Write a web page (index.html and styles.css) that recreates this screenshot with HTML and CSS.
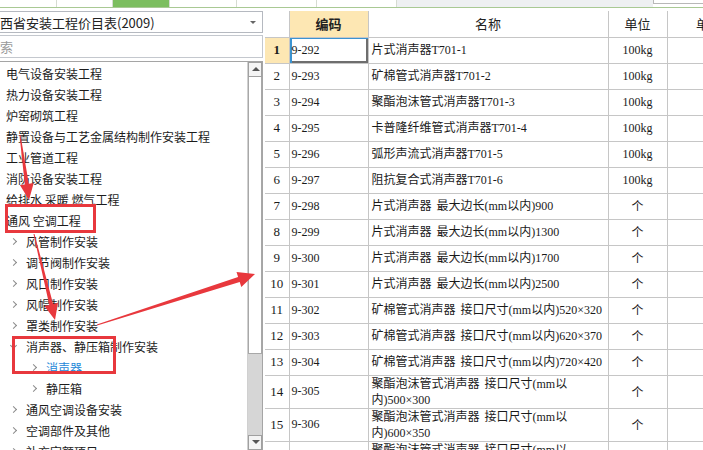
FILE: index.html
```html
<!DOCTYPE html>
<html lang="zh-CN">
<head>
<meta charset="utf-8">
<title>定额库</title>
<link rel="stylesheet" href="styles.css">
</head>
<body>
<div class="page">
  <div class="tabs">
    <div class="tab t1"></div>
    <div class="tab t2"></div>
    <div class="tab t3 on"></div>
    <div class="tab t4"></div>
    <div class="tab t5"></div>
    <div class="tab t6"></div>
    <div class="tab fill"></div>
    <div class="tab t8"></div>
  </div>
  <div class="main">
    <aside class="left">
      <div class="combo"><span class="combo-text">西省安装工程价目表(2009)</span><span class="caret"></span></div>
      <div class="search">索</div>
      <div class="tree">
        <ul class="list">
          <li class="node l0">电气设备安装工程</li>
          <li class="node l0">热力设备安装工程</li>
          <li class="node l0">炉窑砌筑工程</li>
          <li class="node l0">静置设备与工艺金属结构制作安装工程</li>
          <li class="node l0">工业管道工程</li>
          <li class="node l0">消防设备安装工程</li>
          <li class="node l0">给排水 采暖 燃气工程</li>
          <li class="node l0">通风 空调工程</li>
          <li class="node l1"><span class="chev"></span>风管制作安装</li>
          <li class="node l1"><span class="chev"></span>调节阀制作安装</li>
          <li class="node l1"><span class="chev"></span>风口制作安装</li>
          <li class="node l1"><span class="chev"></span>风帽制作安装</li>
          <li class="node l1"><span class="chev"></span>罩类制作安装</li>
          <li class="node l1"><span class="chev open"></span>消声器、静压箱制作安装</li>
          <li class="node l2 sel"><span class="chev"></span>消声器</li>
          <li class="node l2"><span class="chev"></span>静压箱</li>
          <li class="node l1"><span class="chev"></span>通风空调设备安装</li>
          <li class="node l1"><span class="chev"></span>空调部件及其他</li>
          <li class="node l1"><span class="chev"></span>补充定额项目</li>
        </ul>
        <div class="vscroll">
          <div class="sbtn up"></div>
          <div class="thumb"></div>
          <div class="track"></div>
          <div class="sbtn down"></div>
        </div>
      </div>
    </aside>
    <section class="grid">
      <table class="tbl">
        <colgroup>
          <col class="c-rh"><col class="c-code"><col class="c-name"><col class="c-unit"><col class="c-price">
        </colgroup>
        <thead>
          <tr><th class="rh"></th><th class="hl">编码</th><th>名称</th><th>单位</th><th>单价</th></tr>
        </thead>
        <tbody>
          <tr class="cur"><td class="rh">1</td><td class="code focus">9-292</td><td class="name">片式消声器T701-1</td><td class="unit">100kg</td><td></td></tr>
          <tr><td class="rh">2</td><td class="code">9-293</td><td class="name">矿棉管式消声器T701-2</td><td class="unit">100kg</td><td></td></tr>
          <tr><td class="rh">3</td><td class="code">9-294</td><td class="name">聚酯泡沫管式消声器T701-3</td><td class="unit">100kg</td><td></td></tr>
          <tr><td class="rh">4</td><td class="code">9-295</td><td class="name">卡普隆纤维管式消声器T701-4</td><td class="unit">100kg</td><td></td></tr>
          <tr><td class="rh">5</td><td class="code">9-296</td><td class="name">弧形声流式消声器T701-5</td><td class="unit">100kg</td><td></td></tr>
          <tr><td class="rh">6</td><td class="code">9-297</td><td class="name">阻抗复合式消声器T701-6</td><td class="unit">100kg</td><td></td></tr>
          <tr><td class="rh">7</td><td class="code">9-298</td><td class="name">片式消声器 最大边长(mm以内)900</td><td class="unit">个</td><td></td></tr>
          <tr><td class="rh">8</td><td class="code">9-299</td><td class="name">片式消声器 最大边长(mm以内)1300</td><td class="unit">个</td><td></td></tr>
          <tr><td class="rh">9</td><td class="code">9-300</td><td class="name">片式消声器 最大边长(mm以内)1700</td><td class="unit">个</td><td></td></tr>
          <tr><td class="rh">10</td><td class="code">9-301</td><td class="name">片式消声器 最大边长(mm以内)2500</td><td class="unit">个</td><td></td></tr>
          <tr><td class="rh">11</td><td class="code">9-302</td><td class="name">矿棉管式消声器 接口尺寸(mm以内)520×320</td><td class="unit">个</td><td></td></tr>
          <tr><td class="rh">12</td><td class="code">9-303</td><td class="name">矿棉管式消声器 接口尺寸(mm以内)620×370</td><td class="unit">个</td><td></td></tr>
          <tr><td class="rh">13</td><td class="code">9-304</td><td class="name">矿棉管式消声器 接口尺寸(mm以内)720×420</td><td class="unit">个</td><td></td></tr>
          <tr class="two"><td class="rh">14</td><td class="code">9-305</td><td class="name">聚酯泡沫管式消声器 接口尺寸(mm以<br>内)500×300</td><td class="unit">个</td><td></td></tr>
          <tr class="two"><td class="rh">15</td><td class="code">9-306</td><td class="name">聚酯泡沫管式消声器 接口尺寸(mm以<br>内)600×350</td><td class="unit">个</td><td></td></tr>
          <tr class="two"><td class="rh">16</td><td class="code">9-307</td><td class="name">聚酯泡沫管式消声器 接口尺寸(mm以<br>内)700×400</td><td class="unit">个</td><td></td></tr>
        </tbody>
      </table>
    </section>
  </div>
  <svg class="annot" width="703" height="450" viewBox="0 0 703 450">
    <g fill="#e8383d" stroke="none">
      <polygon points="19.5,135.1 24.8,184.4 19.9,185.1 29,200 33.7,183.1 28.8,183.8 20.5,134.9"/>
      <polygon points="33.5,234.1 49.3,304.9 44.4,306.1 55,320 58,302.7 53.1,303.9 34.5,233.9"/>
      <polygon points="96.85,324.5 238.1,277.1 236.5,271.9 255,274 241.3,287.1 239.7,281.9 97.15,325.5"/>
    </g>
    <g fill="none" stroke="#e8383d" stroke-width="3">
      <rect x="6.5" y="205.5" width="88" height="26"/>
      <rect x="13.5" y="337.5" width="101" height="35"/>
    </g>
  </svg>
</div>
</body>
</html>
```

FILE: styles.css
```css
* { box-sizing: border-box; }
html, body { margin: 0; padding: 0; }
body {
  width: 703px;
  height: 450px;
  overflow: hidden;
  background: #ffffff;
  font-family: "Noto Sans CJK SC", "Liberation Sans", sans-serif;
  font-size: 12px;
  color: #1a1a1a;
}
.page { position: relative; width: 703px; height: 450px; overflow: hidden; }

/* top tab strip */
.tabs {
  display: flex;
  height: 8px;
  border-bottom: 1px solid #a9c994;
  background: #ffffff;
}
.tab { height: 7px; border-right: 1px solid #d6dcd2; }
.t1 { width: 57px; }
.t2 { width: 56px; }
.t3 { width: 57px; }
.t4 { width: 67px; }
.t5 { width: 80px; }
.t6 { width: 80px; }
.tab.on { background: #7cbe5f; }
.fill { width: 256px; background: #eef0f2; border-right: none; }
.t8 { flex: 1; height: 4px; border-left: 1px solid #b8b8b8; border-bottom: 1px solid #b8b8b8; border-right: none; }

.main { display: flex; height: 442px; }

/* left panel */
.left {
  width: 263px;
  flex: none;
  display: flex;
  flex-direction: column;
  padding-top: 3px;
  overflow: hidden;
}
.combo {
  height: 22px;
  margin-left: -2px;
  border: 1px solid #b5b9c0;
  display: flex;
  align-items: center;
  justify-content: space-between;
  padding: 0 6px 0 1px;
  font-size: 13px;
  color: #222;
  background: #fff;
}
.caret {
  width: 0; height: 0;
  border-left: 3px solid transparent;
  border-right: 3px solid transparent;
  border-top: 3px solid #666;
}
.search {
  height: 23px;
  margin-top: 2px;
  margin-left: -2px;
  border: 1px solid #c4c8ce;
  padding-left: 1px;
  line-height: 21px;
  font-size: 13px;
  color: #9a9a9a;
}
.tree {
  margin-top: 3px;
  flex: 1;
  display: flex;
  border-top: 1px solid #a5a5a5;
  border-right: 1px solid #a5a5a5;
  overflow: hidden;
}
.list {
  list-style: none;
  margin: 0;
  padding: 1px 0 0 0;
  flex: 1;
  overflow: hidden;
}
.node {
  height: 21px;
  line-height: 21px;
  white-space: nowrap;
  font-size: 12px;
  color: #1c1c1c;
  display: flex;
  align-items: center;
}
.l0 { padding-left: 6px; }
.l1 { padding-left: 11px; }
.l2 { padding-left: 31px; }
.sel { color: #1e88d8; }
.chev {
  width: 5px; height: 5px;
  border-right: 1.5px solid #8a8a8a;
  border-bottom: 1.5px solid #8a8a8a;
  transform: rotate(-45deg);
  margin-right: 10px;
  flex: none;
}
.chev.open { transform: rotate(45deg); margin-top: -3px; }

.vscroll {
  width: 15px;
  flex: none;
  display: flex;
  flex-direction: column;
  border-left: 1px solid #d0d0d0;
  background: #f0f0f0;
}
.sbtn {
  height: 15px;
  flex: none;
  border: 1px solid #a0a0a0;
  background: #f4f4f4;
  position: relative;
}
.sbtn::after {
  content: "";
  position: absolute;
  left: 3px; top: 4px;
  border-left: 4px solid transparent;
  border-right: 4px solid transparent;
}
.up::after { border-bottom: 4px solid #555; }
.down::after { border-top: 4px solid #555; }
.thumb {
  height: 277px;
  flex: none;
  background: #ffffff;
  border: 1px solid #a8a8a8;
  border-top: none;
}
.track { flex: 1; background: #d6d6d6; }

/* grid */
.grid {
  flex: 1;
  margin-left: 2px;
  margin-top: 3px;
  overflow: hidden;
}
.tbl {
  border-collapse: collapse;
  table-layout: fixed;
  width: 486px;
}
.c-rh { width: 24px; }
.c-code { width: 79px; }
.c-name { width: 240px; }
.c-unit { width: 59px; }
.c-price { width: 84px; }
.tbl th, .tbl td {
  border: 1px solid #c6c6c6;
  padding: 0;
  overflow: hidden;
  white-space: nowrap;
}
.tbl th {
  height: 26px;
  font-weight: normal;
  font-size: 13px;
  text-align: center;
  color: #222;
  background: #fff;
  border-top: none;
}
.tbl th.hl { background: #fde7b3; font-weight: bold; }
.tbl th:first-child, .tbl td:first-child { border-left: none; }
.tbl td {
  height: 26px;
  font-family: "Liberation Serif", "Noto Sans CJK SC", serif;
  font-size: 12px;
  color: #1a1a1a;
}
.tbl tr.two td { height: 32px; }
.tbl td.rh {
  text-align: center;
  font-size: 13px;
  background: #fff;
}
.tbl tr.cur td.rh { background: #fde7b3; font-weight: bold; }
.tbl td.code { padding-left: 2px; }
.tbl td.name {
  padding-left: 3px;
  font-family: "Liberation Serif", "Noto Sans CJK SC", serif;
  font-size: 12px;
  line-height: 16px;
  word-spacing: 2px;
}
.tbl td.unit { text-align: center; }
.tbl td.focus {
  box-shadow: inset 2px 1px 0 #3b93d1, inset -2px -2px 0 #6e6e6e;
}

.annot {
  position: absolute;
  left: 0; top: 0;
  pointer-events: none;
}
```
